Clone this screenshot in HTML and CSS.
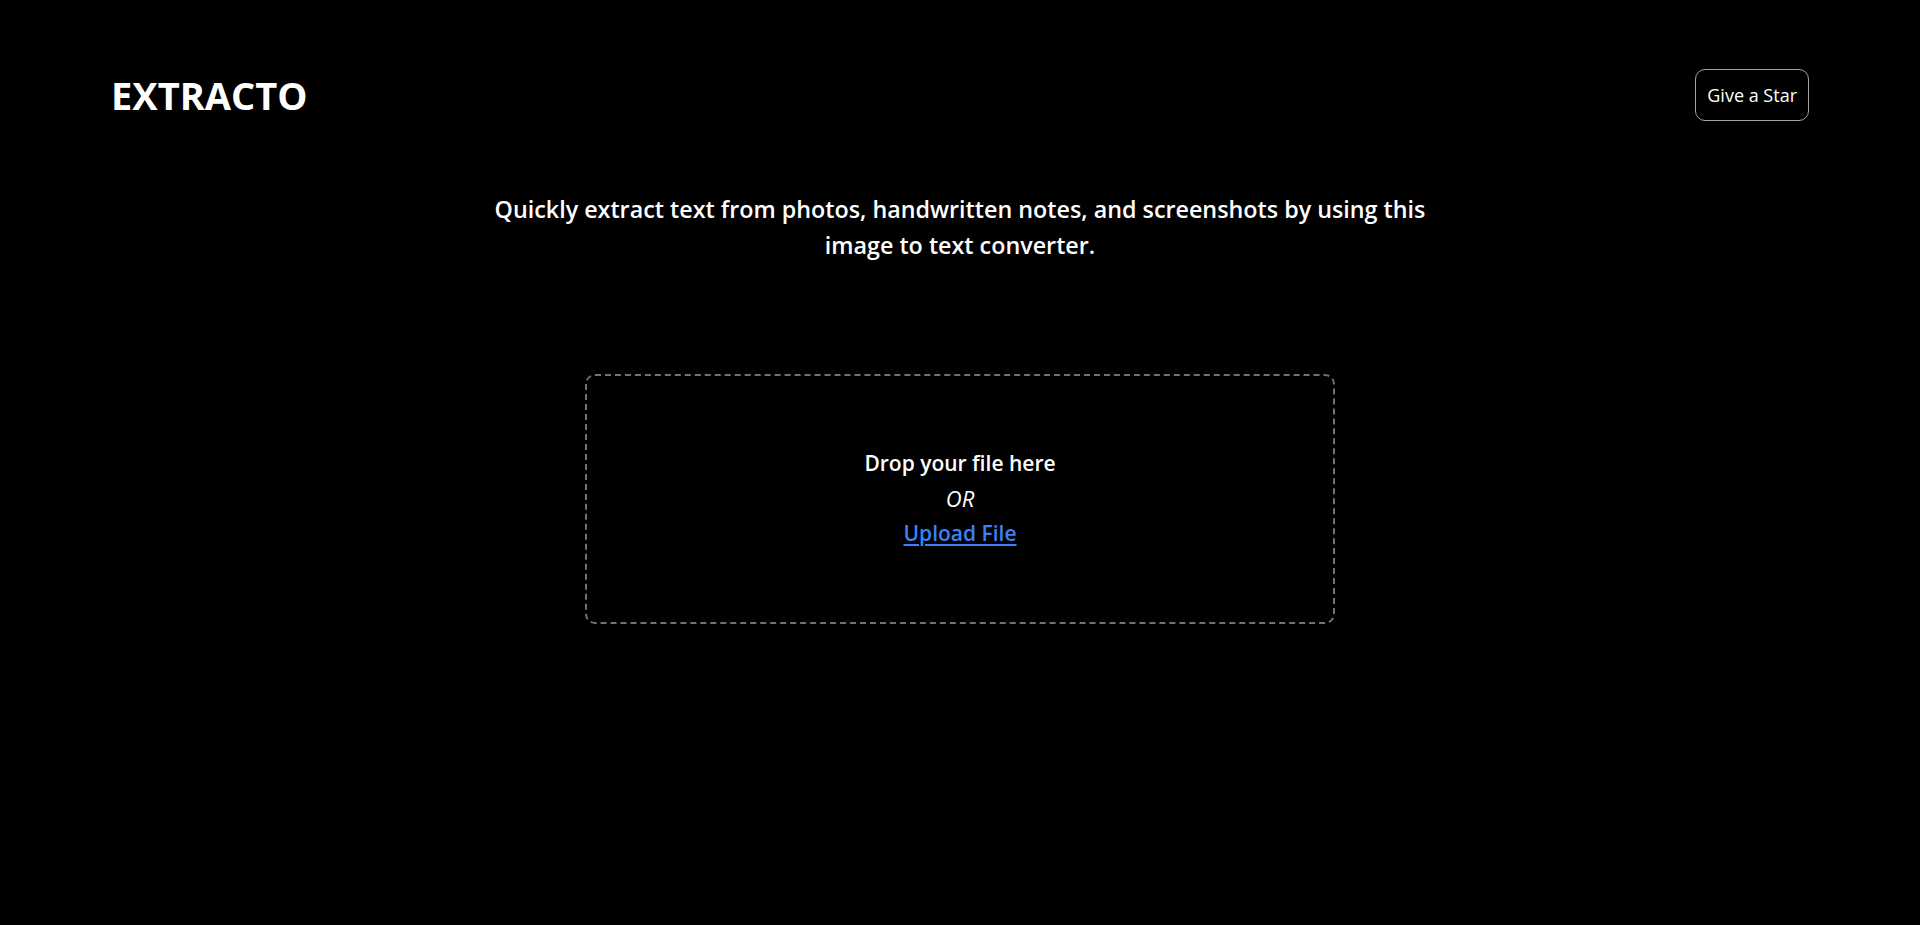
FILE: index.html
```html
<!DOCTYPE html>
<html lang="en">
<head>
<meta charset="utf-8">
<title>Extracto</title>
<link rel="stylesheet" href="styles.css">
</head>
<body>
<header class="topbar">
  <div class="logo">EXTRACTO</div>
  <button class="star-btn" type="button">Give a Star</button>
</header>
<main class="content">
  <p class="tagline">Quickly extract text from photos, handwritten notes, and screenshots by using this image to text converter.</p>
  <div class="dropzone">
    <div class="drop-title">Drop your file here</div>
    <div class="drop-or">OR</div>
    <a class="drop-link" href="#">Upload File</a>
  </div>
</main>
</body>
</html>
```
FILE: styles.css
```css
html, body {
  margin: 0;
  padding: 0;
  background: #000;
  color: #fff;
  font-family: "Open Sans", "Noto Sans", sans-serif;
}

.topbar {
  display: flex;
  justify-content: space-between;
  align-items: center;
  padding: 69px 111px 0 111px;
}

.logo {
  font-size: 38px;
  font-weight: 700;
  line-height: 42px;
  letter-spacing: 0;
}

.star-btn {
  font-family: inherit;
  font-size: 18px;
  line-height: 30px;
  color: #fff;
  background: transparent;
  border: 1px solid #a3a3a3;
  border-radius: 10px;
  padding: 10px 11px;
  cursor: pointer;
}

.content {
  display: flex;
  flex-direction: column;
  align-items: center;
}

.tagline {
  margin: 70px 0 0 0;
  max-width: 960px;
  text-align: center;
  font-size: 23.3px;
  font-weight: 600;
  line-height: 36px;
}

.dropzone {
  box-sizing: border-box;
  width: 750px;
  height: 250px;
  margin-top: 111px;
  border: 2px dashed #6b7280;
  border-radius: 10px;
  display: flex;
  flex-direction: column;
  align-items: center;
  justify-content: center;
  padding-bottom: 2px;
  font-size: 21px;
  line-height: 35px;
}

.drop-title {
  font-weight: 600;
}

.drop-or {
  font-size: 22px;
  font-style: italic;
  font-weight: 400;
}

.drop-link {
  color: #3b82f6;
  font-weight: 600;
  text-decoration: underline;
  text-decoration-thickness: 2px;
  text-underline-offset: 3px;
}
```
